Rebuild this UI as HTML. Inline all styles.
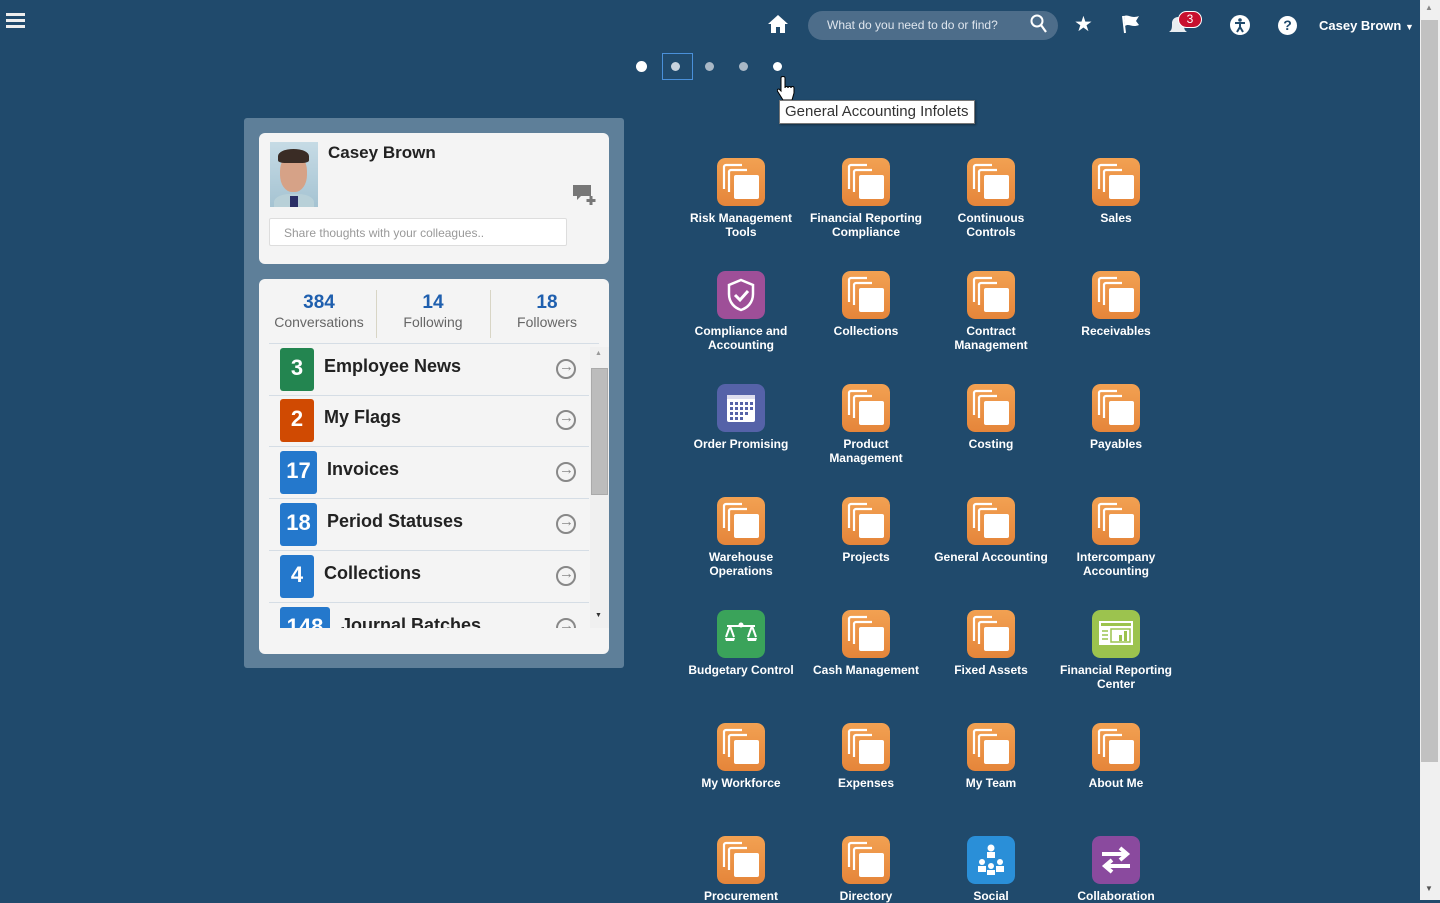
<!DOCTYPE html>
<html><head><meta charset="utf-8"><style>
*{margin:0;padding:0;box-sizing:border-box}
body{width:1440px;height:900px;overflow:hidden;background:#204a6c;font-family:"Liberation Sans",Arial,sans-serif;position:relative}
.abs{position:absolute}
.tile{position:absolute;width:124px;text-align:center;color:#fff;font-weight:bold;font-size:12px;line-height:14px}
.tile .ic{width:48px;height:48px;border-radius:8px;margin:0 auto 5px;display:block;overflow:hidden}
.row{position:absolute;left:269px;width:320px;height:52px;border-bottom:1px solid #d5dde5}
.badge{position:absolute;left:11px;top:4px;height:43px;border-radius:3px;color:#fff;font-weight:bold;font-size:22px;text-align:center;line-height:40px}
.rl{position:absolute;top:12px;font-size:18px;font-weight:bold;color:#222}
.arr{position:absolute;left:287px;top:15px;width:20px;height:20px;border:2px solid #888;border-radius:50%}
.arr:after{content:"→";position:absolute;left:1px;top:-3px;font-size:15px;color:#888;font-weight:bold}
</style></head><body>
<svg width="0" height="0" style="position:absolute"><defs>
<linearGradient id="og" x1="0" y1="0" x2="0" y2="1"><stop offset="0" stop-color="#f2a152"/><stop offset="1" stop-color="#e5853a"/></linearGradient>
<symbol id="stk" viewBox="0 0 48 48"><rect width="48" height="48" rx="8" fill="url(#og)"/>
<path d="M7 31V9a2 2 0 0 1 2-2h16" stroke="#fff" stroke-width="2.2" fill="none"/>
<path d="M12 34V14a2 2 0 0 1 2-2h16" stroke="#fff" stroke-width="2.2" fill="none"/>
<rect x="17" y="17" width="25" height="24" rx="2" fill="#fff"/></symbol>
</defs></svg>

<div class="abs" style="left:6px;top:13px;width:19px;height:3px;background:#eee;box-shadow:0 6px 0 #eee,0 12px 0 #eee"></div>
<svg class="abs" style="left:767px;top:14px" width="22" height="20" viewBox="0 0 22 20"><path d="M11 1L1 10h3v9h5v-6h4v6h5v-9h3z" fill="#fff"/></svg>
<div class="abs" style="left:808px;top:11px;width:250px;height:29px;border-radius:15px;background:#4d6d8a;color:#dfe6ee;font-size:12px;line-height:29px;padding-left:19px">What do you need to do or find?</div>
<svg class="abs" style="left:1030px;top:14px" width="18" height="20" viewBox="0 0 18 20"><circle cx="7" cy="7" r="5.5" stroke="#fff" stroke-width="2" fill="none"/><path d="M11 11l5 7" stroke="#fff" stroke-width="2.2"/></svg>
<div class="abs" style="left:1074px;top:12px;color:#fff;font-size:21px">★</div>
<svg class="abs" style="left:1120px;top:14px" width="22" height="20" viewBox="0 0 22 20"><path d="M3 2l2 17" stroke="#fff" stroke-width="2"/><path d="M4 2c5-2 7 3 15 0l-3 5 3 4c-7 3-10-2-14 1z" fill="#fff"/></svg>
<svg class="abs" style="left:1167px;top:14px" width="22" height="22" viewBox="0 0 22 22"><path d="M2 18c3-2 3-4 3-9a6 6 0 0 1 12 0c0 5 0 7 3 9z" fill="#fff" opacity=".9"/></svg>
<div class="abs" style="left:1178px;top:11px;width:24px;height:17px;border-radius:9px;background:#c8102e;border:1.5px solid #fff;color:#fff;font-size:12px;text-align:center;line-height:14px">3</div>
<div class="abs" style="left:1230px;top:15px;width:20px;height:20px;border-radius:50%;background:#fff"></div>
<svg class="abs" style="left:1230px;top:15px" width="20" height="20" viewBox="0 0 20 20"><circle cx="10" cy="5" r="1.8" fill="#204a6c"/><path d="M5 8h10M10 8v4l-3 5M10 12l3 5" stroke="#204a6c" stroke-width="2" fill="none"/></svg>
<div class="abs" style="left:1278px;top:16px;width:19px;height:19px;border-radius:50%;background:#fff;color:#204a6c;font-weight:bold;font-size:14px;text-align:center;line-height:19px">?</div>
<div class="abs" style="left:1319px;top:18px;color:#fff;font-weight:bold;font-size:13px">Casey Brown <span style="font-size:9px">▼</span></div>

<div class="abs" style="left:636px;top:61px;width:11px;height:11px;border-radius:50%;background:#fff"></div>
<div class="abs" style="left:662px;top:53px;width:31px;height:27px;border:1px solid #4a90d9"></div>
<div class="abs" style="left:671px;top:62px;width:9px;height:9px;border-radius:50%;background:#c8d3dd"></div>
<div class="abs" style="left:705px;top:62px;width:9px;height:9px;border-radius:50%;background:#a9b8c6"></div>
<div class="abs" style="left:739px;top:62px;width:9px;height:9px;border-radius:50%;background:#a9b8c6"></div>
<div class="abs" style="left:773px;top:62px;width:9px;height:9px;border-radius:50%;background:#fff"></div>
<svg class="abs" style="left:777px;top:76px" width="18" height="26" viewBox="0 0 18 26"><path d="M4 2v13l-2-2c-2 0-2 2-1 3l5 8h9l2-7v-5c0-2-3-2-3 0 0-2-3-2-3 0 0-2-3-2-3 0V2c0-2-4-2-4 0z" fill="#fff" stroke="#000"/></svg>
<div class="abs" style="left:779px;top:100px;width:196px;height:24px;padding:0 5px;background:#fff;border:1px solid #777;box-shadow:1px 1px 2px rgba(0,0,0,.4);font-size:15px;line-height:22px;color:#333;white-space:nowrap">General Accounting Infolets</div>

<div class="abs" style="left:244px;top:118px;width:380px;height:550px;background:#5e7f99;border-radius:3px"></div>
<div class="abs" style="left:259px;top:133px;width:350px;height:131px;background:#f4f4f4;border-radius:6px"></div>
<div class="abs" style="left:270px;top:142px;width:48px;height:65px;background:linear-gradient(180deg,#c6dbe5,#a5c3d2);overflow:hidden">
<div style="position:absolute;left:4px;top:52px;width:40px;height:20px;border-radius:40% 40% 0 0;background:#b8d0d8"></div>
<div style="position:absolute;left:20px;top:54px;width:8px;height:11px;background:#2a2f66"></div>
<div style="position:absolute;left:10px;top:12px;width:27px;height:38px;border-radius:45%;background:#d6a287"></div>
<div style="position:absolute;left:8px;top:7px;width:31px;height:14px;border-radius:50% 50% 20% 20%;background:#3a2c25"></div>
</div>
<div class="abs" style="left:328px;top:143px;font-size:17px;font-weight:bold;color:#222">Casey Brown</div>
<svg class="abs" style="left:572px;top:184px" width="26" height="22" viewBox="0 0 26 22"><path d="M1 1h18v11H9l-4 4v-4H1z" fill="#777"/><path d="M19 12v9M14.5 16.5h9" stroke="#777" stroke-width="3"/></svg>
<div class="abs" style="left:269px;top:218px;width:298px;height:28px;background:#fff;border:1px solid #ddd;border-radius:2px;color:#999;font-size:12px;line-height:28px;padding-left:14px">Share thoughts with your colleagues..</div>

<div class="abs" style="left:259px;top:279px;width:350px;height:375px;background:#f4f4f4;border-radius:6px"></div>
<div class="abs" style="left:259px;top:292px;width:120px;text-align:center"><div style="color:#1f5fae;font-weight:bold;font-size:19px">384</div><div style="color:#666;font-size:14px">Conversations</div></div>
<div class="abs" style="left:376px;top:290px;width:1px;height:48px;background:#d8d5c5"></div>
<div class="abs" style="left:376px;top:292px;width:114px;text-align:center"><div style="color:#1f5fae;font-weight:bold;font-size:19px">14</div><div style="color:#666;font-size:14px">Following</div></div>
<div class="abs" style="left:490px;top:290px;width:1px;height:48px;background:#d8d5c5"></div>
<div class="abs" style="left:490px;top:292px;width:114px;text-align:center"><div style="color:#1f5fae;font-weight:bold;font-size:19px">18</div><div style="color:#666;font-size:14px">Followers</div></div>
<div class="abs" style="left:269px;top:343px;width:330px;height:1px;background:#d5dde5"></div>

<div class="abs" style="left:259px;top:344px;width:350px;height:284px;overflow:hidden">
<div class="row" style="left:10px;top:0"><div class="badge" style="width:34px;background:#238550">3</div><div class="rl" style="left:55px">Employee News</div><div class="arr"></div></div>
<div class="row" style="left:10px;top:51px"><div class="badge" style="width:34px;background:#d04a02">2</div><div class="rl" style="left:55px">My Flags</div><div class="arr"></div></div>
<div class="row" style="left:10px;top:103px"><div class="badge" style="width:37px;background:#2478cc">17</div><div class="rl" style="left:58px">Invoices</div><div class="arr"></div></div>
<div class="row" style="left:10px;top:155px"><div class="badge" style="width:37px;background:#2478cc">18</div><div class="rl" style="left:58px">Period Statuses</div><div class="arr"></div></div>
<div class="row" style="left:10px;top:207px"><div class="badge" style="width:34px;background:#2478cc">4</div><div class="rl" style="left:55px">Collections</div><div class="arr"></div></div>
<div class="row" style="left:10px;top:259px"><div class="badge" style="width:50px;background:#2478cc">148</div><div class="rl" style="left:72px">Journal Batches</div><div class="arr"></div></div>
</div>
<div class="abs" style="left:590px;top:347px;width:19px;height:281px;background:#f0f0f0"></div>
<div class="abs" style="left:591px;top:368px;width:17px;height:127px;background:#bcbcbc;border:1px solid #aaa"></div>
<div class="abs" style="left:595px;top:350px;font-size:7px;color:#999">▲</div>
<div class="abs" style="left:595px;top:612px;font-size:7px;color:#333">▼</div>

<div class="tile" style="left:679px;top:158px"><svg class="ic"><use href="#stk"/></svg>Risk Management<br>Tools</div>
<div class="tile" style="left:804px;top:158px"><svg class="ic"><use href="#stk"/></svg>Financial Reporting<br>Compliance</div>
<div class="tile" style="left:929px;top:158px"><svg class="ic"><use href="#stk"/></svg>Continuous<br>Controls</div>
<div class="tile" style="left:1054px;top:158px"><svg class="ic"><use href="#stk"/></svg>Sales</div>

<div class="tile" style="left:679px;top:271px"><svg class="ic" viewBox="0 0 48 48"><rect width="48" height="48" rx="8" fill="#9e4f98"/><path d="M24 9l12 5v9c0 9-6 14-12 16-6-2-12-7-12-16v-9z" stroke="#fff" stroke-width="2.5" fill="none"/><path d="M18 24l5 5 8-9" stroke="#fff" stroke-width="3" fill="none"/></svg>Compliance and<br>Accounting</div>
<div class="tile" style="left:804px;top:271px"><svg class="ic"><use href="#stk"/></svg>Collections</div>
<div class="tile" style="left:929px;top:271px"><svg class="ic"><use href="#stk"/></svg>Contract<br>Management</div>
<div class="tile" style="left:1054px;top:271px"><svg class="ic"><use href="#stk"/></svg>Receivables</div>

<div class="tile" style="left:679px;top:384px"><svg class="ic" viewBox="0 0 48 48"><rect width="48" height="48" rx="8" fill="#5562a8"/><rect x="10" y="11" width="28" height="27" rx="2" fill="#fff"/><rect x="10" y="11" width="28" height="4" fill="#dde"/><g fill="#5562a8"><rect x="13" y="18" width="3" height="3"/><rect x="18" y="18" width="3" height="3"/><rect x="23" y="18" width="3" height="3"/><rect x="28" y="18" width="3" height="3"/><rect x="33" y="18" width="3" height="3"/><rect x="13" y="23" width="3" height="3"/><rect x="18" y="23" width="3" height="3"/><rect x="23" y="23" width="3" height="3"/><rect x="28" y="23" width="3" height="3"/><rect x="33" y="23" width="3" height="3"/><rect x="13" y="28" width="3" height="3"/><rect x="18" y="28" width="3" height="3"/><rect x="23" y="28" width="3" height="3"/><rect x="28" y="28" width="3" height="3"/><rect x="13" y="33" width="3" height="3"/><rect x="18" y="33" width="3" height="3"/><rect x="23" y="33" width="3" height="3"/></g></svg>Order Promising</div>
<div class="tile" style="left:804px;top:384px"><svg class="ic"><use href="#stk"/></svg>Product<br>Management</div>
<div class="tile" style="left:929px;top:384px"><svg class="ic"><use href="#stk"/></svg>Costing</div>
<div class="tile" style="left:1054px;top:384px"><svg class="ic"><use href="#stk"/></svg>Payables</div>

<div class="tile" style="left:679px;top:497px"><svg class="ic"><use href="#stk"/></svg>Warehouse<br>Operations</div>
<div class="tile" style="left:804px;top:497px"><svg class="ic"><use href="#stk"/></svg>Projects</div>
<div class="tile" style="left:929px;top:497px"><svg class="ic"><use href="#stk"/></svg>General Accounting</div>
<div class="tile" style="left:1054px;top:497px"><svg class="ic"><use href="#stk"/></svg>Intercompany<br>Accounting</div>

<div class="tile" style="left:679px;top:610px"><svg class="ic" viewBox="0 0 48 48"><rect width="48" height="48" rx="8" fill="#3aa35a"/><path d="M10 16h28M24 13v3M13 16l-4 11M13 16l4 11M35 16l-4 11M35 16l4 11" stroke="#fff" stroke-width="2" fill="none"/><path d="M8 28h10l-1 3H9zM30 28h10l-1 3h-8z" fill="#fff"/><circle cx="24" cy="15" r="2.5" fill="#fff"/></svg>Budgetary Control</div>
<div class="tile" style="left:804px;top:610px"><svg class="ic"><use href="#stk"/></svg>Cash Management</div>
<div class="tile" style="left:929px;top:610px"><svg class="ic"><use href="#stk"/></svg>Fixed Assets</div>
<div class="tile" style="left:1054px;top:610px"><svg class="ic" viewBox="0 0 48 48"><rect width="48" height="48" rx="8" fill="#9cc34e"/><rect x="7" y="11" width="34" height="24" fill="#fff"/><rect x="9" y="13" width="30" height="3" fill="#9cc34e"/><path d="M10 21h6M10 25h6M10 29h6" stroke="#9cc34e" stroke-width="1.5"/><rect x="19" y="19" width="19" height="13" fill="none" stroke="#9cc34e" stroke-width="1.5"/><rect x="27" y="25" width="3" height="6" fill="#9cc34e"/><rect x="32" y="21" width="3" height="10" fill="#9cc34e"/></svg>Financial Reporting<br>Center</div>

<div class="tile" style="left:679px;top:723px"><svg class="ic"><use href="#stk"/></svg>My Workforce</div>
<div class="tile" style="left:804px;top:723px"><svg class="ic"><use href="#stk"/></svg>Expenses</div>
<div class="tile" style="left:929px;top:723px"><svg class="ic"><use href="#stk"/></svg>My Team</div>
<div class="tile" style="left:1054px;top:723px"><svg class="ic"><use href="#stk"/></svg>About Me</div>

<div class="tile" style="left:679px;top:836px"><svg class="ic"><use href="#stk"/></svg>Procurement</div>
<div class="tile" style="left:804px;top:836px"><svg class="ic"><use href="#stk"/></svg>Directory</div>
<div class="tile" style="left:929px;top:836px"><svg class="ic" viewBox="0 0 48 48"><rect width="48" height="48" rx="8" fill="#2a8fd8"/><circle cx="24" cy="12" r="3.5" fill="#fff"/><rect x="20" y="16" width="8" height="6" fill="#fff"/><circle cx="15" cy="26" r="3" fill="#fff"/><circle cx="33" cy="26" r="3" fill="#fff"/><rect x="11" y="30" width="8" height="6" fill="#fff"/><rect x="29" y="30" width="8" height="6" fill="#fff"/><circle cx="24" cy="30" r="3" fill="#fff"/><rect x="20" y="34" width="8" height="5" fill="#fff"/></svg>Social</div>
<div class="tile" style="left:1054px;top:836px"><svg class="ic" viewBox="0 0 48 48"><rect width="48" height="48" rx="8" fill="#8a4a9e"/><path d="M10 18h24M28 12l7 6-7 6M38 30H14M20 24l-7 6 7 6" stroke="#fff" stroke-width="4" fill="none"/></svg>Collaboration</div>

<div class="abs" style="left:1420px;top:0;width:20px;height:900px;background:#f0f0f0"></div>
<div class="abs" style="left:1421px;top:20px;width:17px;height:742px;background:#c1c1c1"></div>
<div class="abs" style="left:1425px;top:3px;font-size:8px;color:#888">▲</div>
<div class="abs" style="left:1425px;top:884px;font-size:8px;color:#555">▼</div>
</body></html>
